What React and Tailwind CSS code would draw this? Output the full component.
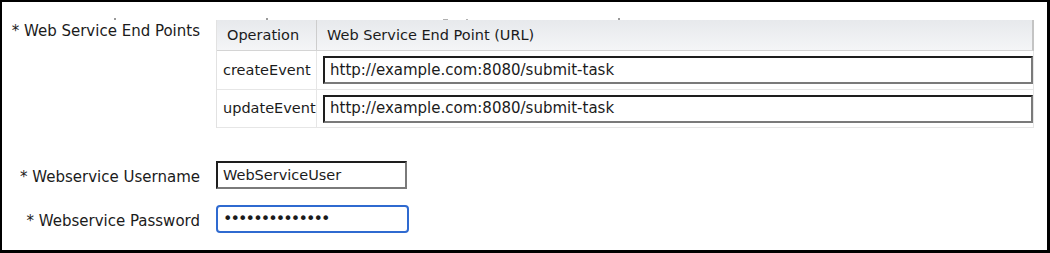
import React from "react";

const rows = [
  { op: "createEvent", url: "http://example.com:8080/submit-task", h: "h-[39px]" },
  { op: "updateEvent", url: "http://example.com:8080/submit-task", h: "h-[38px]" },
];

const insetBox =
  "border-2 border-t-[#1e1e1e] border-l-[#1e1e1e] border-b-[#7a7a7a] border-r-[#7a7a7a] bg-white";

export default function App() {
  return (
    <div className="w-[1050px] h-[253px] bg-white border-black border-t-2 border-l-2 border-r-[3px] border-b-[3px] font-['DejaVu_Sans',sans-serif] text-[15px] text-[#1b1b1b] overflow-hidden">
      {/* clipped descenders from the row above */}
      <div className="h-[18px] flex items-end">
        <span className="ml-[112px] w-[2px] h-[2px] bg-[#9a9a9a]" />
        <span className="ml-[150px] w-[2px] h-[2px] bg-[#9a9a9a]" />
        <span className="ml-[175px] w-[5px] h-[1px] bg-[#b0b0b0]" />
        <span className="ml-[18px] w-[2px] h-[1px] bg-[#b0b0b0]" />
        <span className="ml-[150px] w-[2px] h-[2px] bg-[#9a9a9a]" />
      </div>

      <div className="grid grid-cols-[190px_818px] gap-x-4 pl-2">
        {/* End points */}
        <div className="text-right leading-[18px] pt-[2px] whitespace-nowrap">
          * Web Service End Points
        </div>
        <div className="border-l border-[#e2e2e2]">
          <div className="flex h-[31px] bg-gradient-to-b from-[#e7e9ec] to-[#f4f5f7] border-b border-[#d4d4d4] border-r-2 border-r-[#c4c4c4]">
            <div className="w-[100px] flex items-center pl-[10px] pt-[1px] border-r border-[#cdcdcd] text-[14.5px]">
              Operation
            </div>
            <div className="flex-1 flex items-center pl-[10px] pt-[1px] text-[14.5px]">
              Web Service End Point (URL)
            </div>
          </div>
          {rows.map((r) => (
            <div
              key={r.op}
              className={`flex ${r.h} border-b border-[#e6e6e6] border-r border-r-[#e6e6e6]`}
            >
              <div className="w-[100px] flex items-center pl-[6px] pt-[1px] border-r border-[#e6e6e6] text-[14.5px] whitespace-nowrap">
                {r.op}
              </div>
              <div className="flex-1 flex items-center pl-[6px]">
                <div className={`${insetBox} w-full h-[28px] flex items-center pl-[5px] leading-none`}>
                  {r.url}
                </div>
              </div>
            </div>
          ))}
        </div>

        {/* Username */}
        <div className="mt-[33px] h-[28px] pt-[4px] flex items-center justify-end whitespace-nowrap">
          * Webservice Username
        </div>
        <div className="mt-[33px]">
          <div className={`${insetBox} w-[191px] h-[28px] flex items-center pl-[5px] text-[14.5px] leading-none`}>
            WebServiceUser
          </div>
        </div>

        {/* Password */}
        <div className="mt-[16px] h-[28px] pt-[4px] flex items-center justify-end whitespace-nowrap">
          * Webservice Password
        </div>
        <div className="mt-[16px]">
          <div className="w-[193px] h-[28px] border-2 border-[#2f6ad0] rounded-[4px] bg-white flex items-center pl-[5px] text-[16px] tracking-[-1.9px] leading-none">
            ••••••••••••••
          </div>
        </div>
      </div>
    </div>
  );
}
